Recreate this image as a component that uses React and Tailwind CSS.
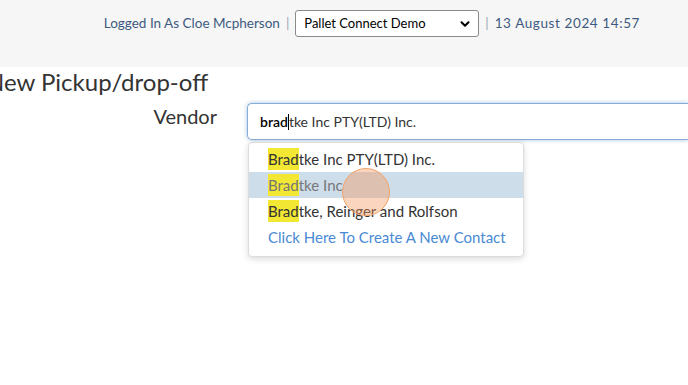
import { ChevronDown } from "lucide-react";

const items = [
  { rest: "tke Inc PTY(LTD) Inc.", active: false },
  { rest: "tke Inc", active: true },
  { rest: "tke, Reinger and Rolfson", active: false },
];

export default function App() {
  return (
    <div className="h-[385px] w-[688px] overflow-hidden bg-white font-['Lato',sans-serif]">
      <div className="flex h-[67px] items-start justify-end bg-[#f6f6f6] pr-[48px] pt-[10px] text-[13.5px] text-[#3d5a80]">
        <div className="flex items-center gap-[6px]">
          <span>Logged In As Cloe Mcpherson</span>
          <span className="text-[#9aa7b5]">|</span>
          <div className="relative flex h-[27px] w-[184px] items-center rounded-[3px] border border-[#8a8a8a] bg-white pl-[8px] text-[13px] text-black">
            Pallet Connect Demo
            <ChevronDown className="absolute right-[6px] h-[14px] w-[14px]" strokeWidth={3.5} />
          </div>
          <span className="text-[#9aa7b5]">|</span>
          <span className="tracking-[0.6px]">13 August 2024 14:57</span>
        </div>
      </div>

      <h1 className="-ml-[14px] mt-0 whitespace-nowrap text-[24px] leading-[30px] text-[#333]">New Pickup/drop-off</h1>

      <div className="mt-[6px] flex items-start">
        <label className="w-[217px] text-right text-[20px] leading-[26px] text-[#333]">Vendor</label>
        <div className="relative ml-[30px] flex-1">
          <div className="flex h-[37px] items-center rounded-l-[5px] border border-r-0 border-[#86abd4] pl-[12px] text-[14px] text-[#333] shadow-[0_0_4px_rgba(102,153,204,0.6)]">
            <span className="font-semibold text-black">brad</span>
            <span className="h-[16px] w-px bg-black" />
            <span>tke Inc PTY(LTD) Inc.</span>
          </div>
          <div className="absolute left-[1px] top-[39px] w-[276px] rounded-[4px] border border-[#dcdcdc] bg-white pb-[6px] pt-[3px] text-[15px] shadow-[0_2px_6px_rgba(0,0,0,0.15)]">
            {items.map((it, i) => (
              <div
                key={i}
                className={
                  "flex h-[26px] items-center pl-[19px] " +
                  (it.active ? "bg-[#cddde9] text-[#777]" : "text-[#333]")
                }
              >
                <span className="bg-[#f2e834]">Brad</span>
                <span>{it.rest}</span>
              </div>
            ))}
            <div className="flex h-[26px] items-center pl-[19px] text-[#4a8ad4]">Click Here To Create A New Contact</div>
          </div>
          <div className="pointer-events-none absolute left-[95px] top-[65px] h-[48px] w-[48px] rounded-full border border-[#f2a46a] bg-[rgba(245,150,90,0.4)]" />
        </div>
      </div>
    </div>
  );
}
